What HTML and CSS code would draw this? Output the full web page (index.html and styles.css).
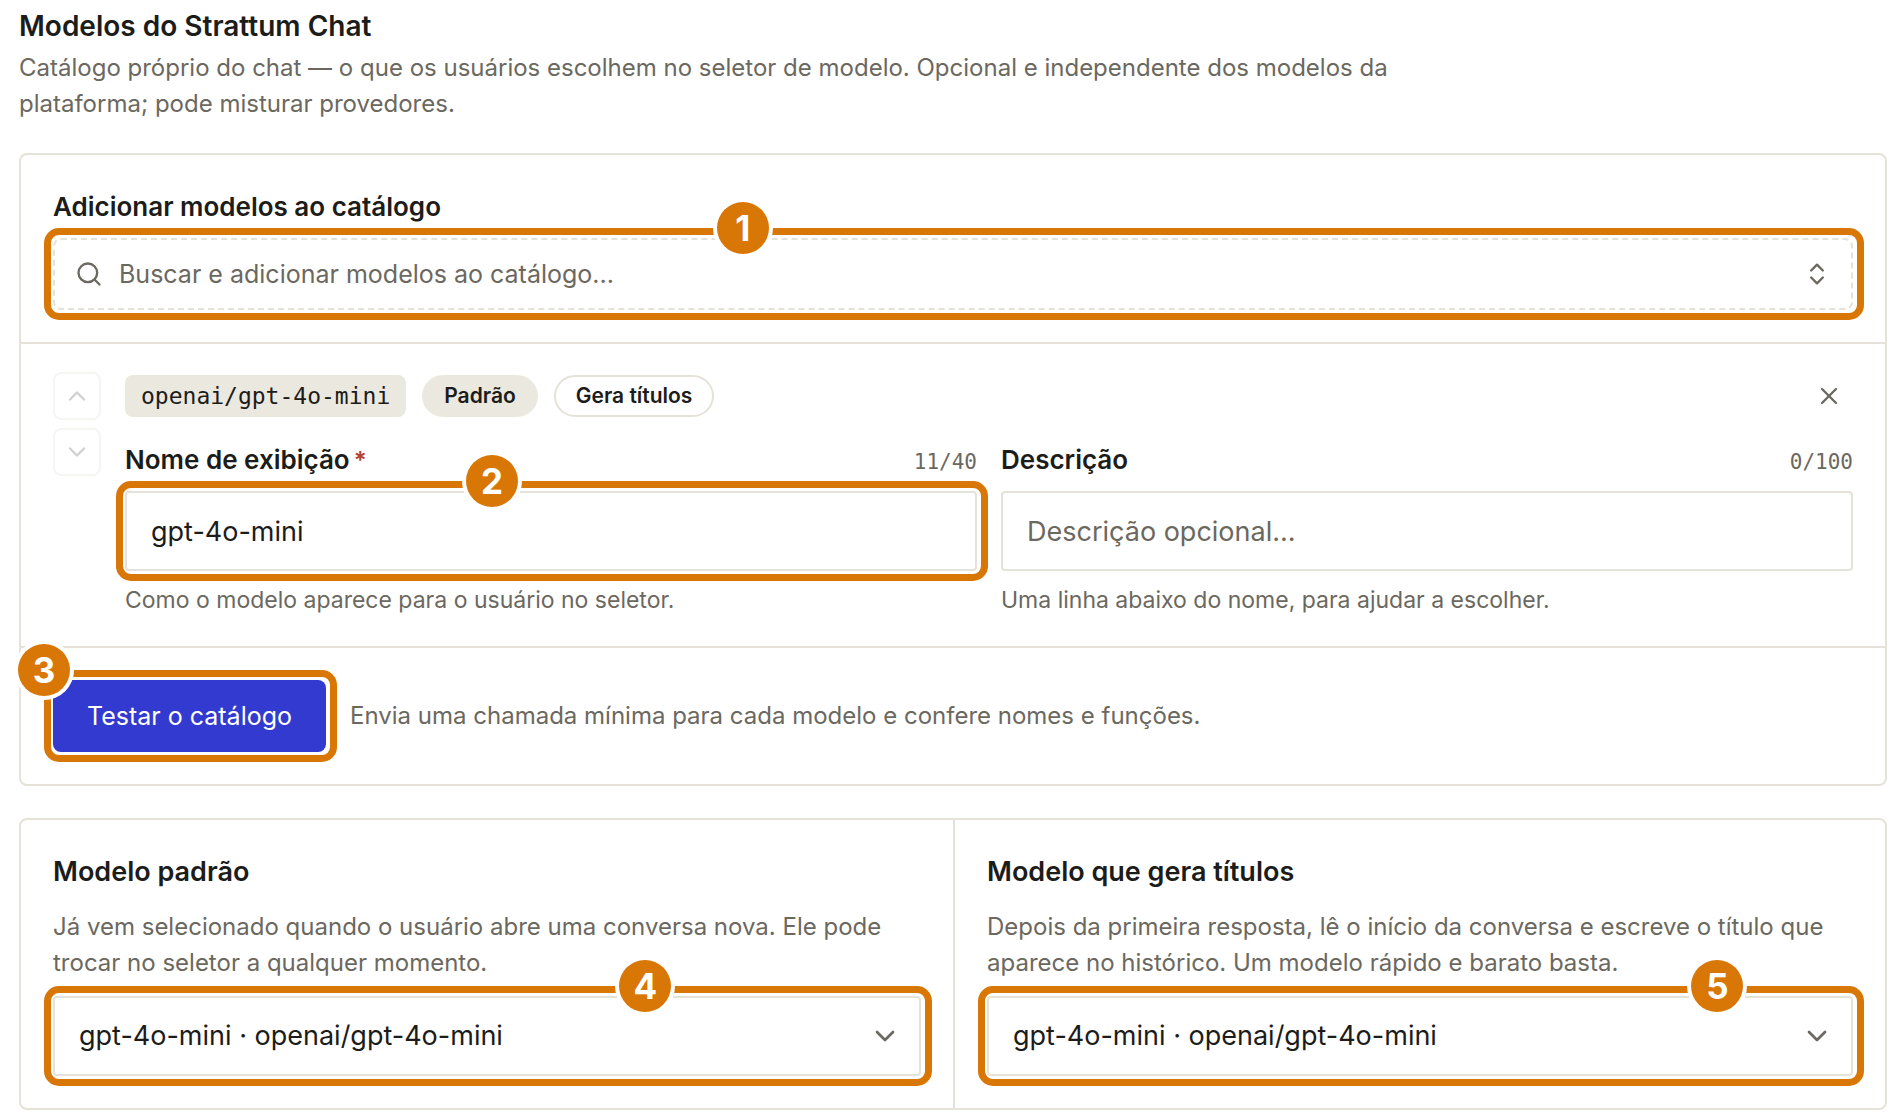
FILE: index.html
```html
<!DOCTYPE html>
<html lang="pt-BR">
<head>
<meta charset="utf-8">
<meta name="viewport" content="width=device-width, initial-scale=1">
<title>Modelos do Strattum Chat</title>
<link rel="stylesheet" href="styles.css">
</head>
<body>
<main class="page">
  <header class="page-header">
    <h1 class="page-title">Modelos do Strattum Chat</h1>
    <p class="muted page-intro">Catálogo próprio do chat — o que os usuários escolhem no seletor de modelo. Opcional e independente dos modelos da plataforma; pode misturar provedores.</p>
  </header>

  <section class="card">
    <div class="card-section">
      <h2 class="label label-spaced" id="add-label">Adicionar modelos ao catálogo</h2>
      <div class="marked">
        <button class="search" type="button" aria-labelledby="add-label">
          <svg class="icon" viewBox="0 0 24 24"><circle cx="11" cy="11" r="8"/><path d="m21 21-4.300-4.300"/></svg>
          <span class="search-text">Buscar e adicionar modelos ao catálogo...</span>
          <svg class="icon" viewBox="0 0 24 24"><path d="m7 15 5 5 5-5"/><path d="m7 9 5-5 5 5"/></svg>
        </button>
        <span class="ring"><span class="badge badge-search">1</span></span>
      </div>
    </div>

    <div class="card-section model">
      <div class="order">
        <button class="order-button" type="button" aria-label="Mover para cima" disabled>
          <svg class="icon" viewBox="0 0 24 24"><path d="m18 15-6-6-6 6"/></svg>
        </button>
        <button class="order-button" type="button" aria-label="Mover para baixo" disabled>
          <svg class="icon" viewBox="0 0 24 24"><path d="m6 9 6 6 6-6"/></svg>
        </button>
      </div>
      <div class="model-body">
        <div class="model-head">
          <code class="chip">openai/gpt-4o-mini</code>
          <span class="pill pill-filled">Padrão</span>
          <span class="pill">Gera títulos</span>
          <button class="remove" type="button" aria-label="Remover modelo">
            <svg class="icon" viewBox="0 0 24 24"><path d="M18 6 6 18"/><path d="m6 6 12 12"/></svg>
          </button>
        </div>
        <div class="fields">
          <div class="field">
            <div class="field-head">
              <label class="label" for="name">Nome de exibição<span class="required">*</span></label>
              <span class="counter">11/40</span>
            </div>
            <div class="marked">
              <input class="input" id="name" type="text" value="gpt-4o-mini">
              <span class="ring"><span class="badge badge-name">2</span></span>
            </div>
            <p class="muted help">Como o modelo aparece para o usuário no seletor.</p>
          </div>
          <div class="field">
            <div class="field-head">
              <label class="label" for="description">Descrição</label>
              <span class="counter">0/100</span>
            </div>
            <input class="input" id="description" type="text" placeholder="Descrição opcional...">
            <p class="muted help">Uma linha abaixo do nome, para ajudar a escolher.</p>
          </div>
        </div>
      </div>
    </div>

    <div class="card-section actions">
      <div class="marked">
        <button class="primary" type="button">Testar o catálogo</button>
        <span class="ring"><span class="badge">3</span></span>
      </div>
      <p class="muted">Envia uma chamada mínima para cada modelo e confere nomes e funções.</p>
    </div>
  </section>

  <section class="card choices">
    <div class="choice">
      <label class="label choice-title" for="default-model">Modelo padrão</label>
      <p class="muted choice-text">Já vem selecionado quando o usuário abre uma conversa nova. Ele pode trocar no seletor a qualquer momento.</p>
      <div class="marked">
        <select class="input select" id="default-model"><option>gpt-4o-mini · openai/gpt-4o-mini</option></select>
        <svg class="icon select-arrow" viewBox="0 0 24 24"><path d="m6 9 6 6 6-6"/></svg>
        <span class="ring"><span class="badge badge-default">4</span></span>
      </div>
    </div>
    <div class="choice">
      <label class="label choice-title" for="title-model">Modelo que gera títulos</label>
      <p class="muted choice-text">Depois da primeira resposta, lê o início da conversa e escreve o título que aparece no histórico. Um modelo rápido e barato basta.</p>
      <div class="marked">
        <select class="input select" id="title-model"><option>gpt-4o-mini · openai/gpt-4o-mini</option></select>
        <svg class="icon select-arrow" viewBox="0 0 24 24"><path d="m6 9 6 6 6-6"/></svg>
        <span class="ring"><span class="badge badge-titles">5</span></span>
      </div>
    </div>
  </section>
</main>
</body>
</html>
```
FILE: styles.css
```css
:root {
  --ink: #1c1c1a;
  --muted: #6b6860;
  --line: #e5e2d9;
  --fill: #ebe8df;
  --blue: #323acf;
  --mark: #d97706;
}

* { box-sizing: border-box; }

body {
  margin: 0;
  background: #fff;
  color: var(--ink);
  font-family: Inter, "Liberation Sans", sans-serif;
  font-size: 24px;
  line-height: 36px;
}

h1, h2, p { margin: 0; }

button, input, select { font: inherit; color: inherit; }

.page { padding: 4px 14px 2px 19px; }

.page-header { margin-bottom: 31px; }

.page-title { margin-bottom: 2px; font-size: 28px; line-height: 44px; font-weight: 600; }

.page-intro { max-width: 1400px; }

.muted { color: var(--muted); }

.card { border: 2px solid var(--line); border-radius: 8px; }

.card + .card { margin-top: 32px; }

.card-section { padding: 32px; }

.card-section + .card-section { border-top: 2px solid var(--line); }

.label { display: block; font-size: 26px; line-height: 39px; font-weight: 600; }

.label-spaced { margin-bottom: 12px; }

.icon {
  flex: none;
  display: block;
  width: 28px;
  height: 28px;
  fill: none;
  stroke: currentColor;
  stroke-width: 2;
  stroke-linecap: round;
  stroke-linejoin: round;
}

/* Numbered callouts drawn around a control */
.marked { position: relative; }

.ring {
  position: absolute;
  inset: -10px -11px -10px -9px;
  border: 7px solid var(--mark);
  border-radius: 15px;
  pointer-events: none;
}

.badge {
  position: absolute;
  top: -7px;
  left: -7px;
  width: 52px;
  height: 52px;
  margin: -26px;
  border-radius: 50%;
  background: var(--mark);
  box-shadow: 0 0 0 4px #fff;
  color: #fff;
  font-size: 35px;
  line-height: 52px;
  font-weight: 700;
  text-align: center;
}

.badge-search { left: 38.3%; }
.badge-name { left: 43%; }
.badge-default { left: 68%; }
.badge-titles { left: 84%; }

.search {
  display: flex;
  align-items: center;
  gap: 16px;
  width: 100%;
  height: 72px;
  padding: 0 20px;
  border: 2px dashed var(--line);
  border-radius: 8px;
  background: none;
  color: var(--muted);
  font-size: 25px;
  text-align: left;
}

.search-text { flex: 1; }

.model { display: flex; gap: 24px; padding: 28px 32px; }

.order { display: flex; flex-direction: column; gap: 8px; }

.order-button {
  display: grid;
  place-items: center;
  width: 48px;
  height: 48px;
  padding: 0;
  border: 2px solid var(--line);
  border-radius: 8px;
  background: none;
  color: var(--muted);
  opacity: 0.3;
}

.model-body { flex: 1; }

.model-head { display: flex; align-items: center; gap: 16px; height: 48px; margin-bottom: 20px; }

.chip {
  padding: 0 16px;
  border-radius: 8px;
  background: var(--fill);
  font-family: "DejaVu Sans Mono", monospace;
  font-size: 23px;
  line-height: 42px;
}

.pill {
  padding: 0 20px;
  border: 2px solid var(--line);
  border-radius: 21px;
  font-size: 21px;
  line-height: 38px;
  font-weight: 600;
}

.pill-filled { border-color: var(--fill); background: var(--fill); }

.remove {
  display: grid;
  place-items: center;
  width: 48px;
  height: 48px;
  margin-left: auto;
  padding: 0;
  border: 0;
  background: none;
  color: var(--muted);
}

.fields { display: grid; grid-template-columns: 1fr 1fr; gap: 24px; }

.field-head { display: flex; align-items: baseline; justify-content: space-between; margin-bottom: 12px; }

.required { margin-left: 4px; color: #b3412e; font-size: 24px; line-height: 1; }

.counter {
  color: var(--muted);
  font-family: "DejaVu Sans Mono", monospace;
  font-size: 21px;
  line-height: 32px;
}

.input {
  display: block;
  width: 100%;
  height: 80px;
  padding: 0 24px;
  border: 2px solid var(--line);
  border-radius: 4px;
  background: none;
  font-size: 27px;
}

.input::placeholder { color: var(--muted); opacity: 1; }

.help { margin-top: 12px; font-size: 23px; line-height: 35px; }

.actions { display: flex; align-items: center; gap: 24px; }

.primary {
  height: 72px;
  padding: 0 34px;
  border: 0;
  border-radius: 8px;
  background: var(--blue);
  color: #fff;
  font-size: 25px;
}

.choices { display: grid; grid-template-columns: 1fr 1fr; }

.choice { padding: 32px; }

.choice + .choice { border-left: 2px solid var(--line); }

.choice-title { margin-bottom: 17px; font-size: 27px; line-height: 40px; }

.choice-text { margin-bottom: 15px; }

.select { appearance: none; padding-right: 64px; }

.select-arrow {
  position: absolute;
  top: 24px;
  right: 20px;
  width: 32px;
  height: 32px;
  color: var(--muted);
  pointer-events: none;
}
```
